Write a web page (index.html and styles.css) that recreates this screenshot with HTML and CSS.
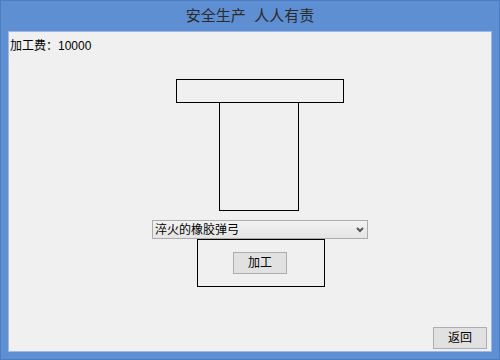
FILE: index.html
```html
<!DOCTYPE html>
<html lang="zh-CN">
<head>
  <meta charset="UTF-8" />
  <title>安全生产 人人有责</title>
  <link rel="stylesheet" href="styles.css">
</head>
<body>
  <div class="window">
    <div class="titlebar">安全生产&nbsp; 人人有责</div>
    <div class="client">
      <div class="fee">加工费：10000</div>

      <div class="part">
        <div class="part-head"></div>
        <div class="part-stem"></div>
      </div>

      <div class="combo">
        <span>淬火的橡胶弹弓</span>
        <svg width="8" height="6" viewBox="0 0 8 6"><polyline points="1,1 4,4 7,1" fill="none" stroke="#555" stroke-width="2"/></svg>
      </div>

      <div class="work-box">
        <button class="btn">加工</button>
      </div>

      <div class="footer">
        <button class="btn">返回</button>
      </div>
    </div>
  </div>
</body>
</html>
```

FILE: styles.css
```css
body {
  margin: 0;
  font-family: "Liberation Sans", "Noto Sans CJK SC", sans-serif;
  font-size: 12px;
  color: #000;
}
.window {
  width: 500px;
  height: 360px;
  box-sizing: border-box;
  background: #5f8fd3;
  border: 1px solid #4d7cc2;
  display: flex;
  flex-direction: column;
}
.titlebar {
  height: 30px;
  line-height: 30px;
  text-align: center;
  font-size: 15px;
  color: #2b2b2b;
}
.client {
  flex: 1;
  margin: 0 7px 7px;
  background: #f0f0f0;
  border: 1px solid #9db8e2;
  display: flex;
  flex-direction: column;
  align-items: flex-start;
}
.fee {
  padding: 7px 0 0 1px;
  line-height: 14px;
}
.part-head {
  margin: 26px 0 0 167px;
  width: 168px;
  height: 24px;
  box-sizing: border-box;
  border: 1px solid #000;
}
.part-stem {
  margin-left: 210px;
  width: 80px;
  height: 108px;
  box-sizing: border-box;
  border: 1px solid #000;
  border-top: none;
}
.combo {
  margin: 9px 0 0 143px;
  width: 216px;
  height: 19px;
  box-sizing: border-box;
  border: 1px solid #acacac;
  background: linear-gradient(#f2f2f2, #e5e5e5);
  display: flex;
  align-items: center;
  justify-content: space-between;
  padding: 0 3px 0 2px;
  line-height: 14px;
}
.work-box {
  margin-left: 188px;
  width: 128px;
  height: 48px;
  box-sizing: border-box;
  border: 1px solid #000;
  padding: 12px 0 0 35px;
}
.btn {
  display: block;
  width: 54px;
  height: 22px;
  padding: 0;
  font-family: inherit;
  font-size: 12px;
  line-height: 14px;
  color: #000;
  background: #e1e1e1;
  border: 1px solid #adadad;
}
.footer {
  margin-top: auto;
  align-self: flex-end;
  padding: 0 4px 2px 0;
}
```
